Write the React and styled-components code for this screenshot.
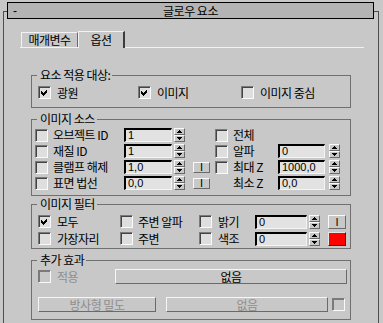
import React from "react";
import styled, { createGlobalStyle } from "styled-components";

const FONT = `"Noto Sans CJK KR", "Liberation Sans", sans-serif`;
const MONO = `"Liberation Sans", Arial, sans-serif`;

const COLORS = {
  face: "#c8c8c8",
  title: "#b4b4b4",
  light: "#f2f2f2",
  shadow: "#6a6a6a",
  dark: "#111111",
  field: "#dedede",
  frame: "#707070",
  disabled: "#8e8e8e",
};

const TEXT = `
  font-size: 12px;
  letter-spacing: -0.5px;
`;

const GlobalStyle = createGlobalStyle`
  html, body {
    margin: 0;
    background: ${COLORS.face};
  }
  body {
    font-family: ${FONT};
    font-size: 12px;
    color: #000;
  }
  * {
    box-sizing: border-box;
  }
`;

function CheckMark() {
  return (
    <svg width="7" height="7" viewBox="0 0 7 7" shapeRendering="crispEdges">
      <polygon points="0,2 2,4 6,0 6,3 2,7 0,5" fill="#000" />
    </svg>
  );
}

function Arrow({ down }) {
  return (
    <svg width="5" height="3" viewBox="0 0 5 3" shapeRendering="crispEdges">
      <polygon points={down ? "0,0 5,0 2.5,3" : "2.5,0 5,3 0,3"} fill="#000" />
    </svg>
  );
}

function CheckField({ label, checked, disabled, hidden, gap = 5 }) {
  return (
    <CheckWrap $gap={gap}>
      <Box $disabled={disabled} $hidden={hidden}>
        {checked && <CheckMark />}
      </Box>
      <Label $disabled={disabled}>{label}</Label>
    </CheckWrap>
  );
}

function Spinner() {
  return (
    <Spin>
      <SpinHalf>
        <Arrow />
      </SpinHalf>
      <SpinHalf>
        <Arrow down />
      </SpinHalf>
    </Spin>
  );
}

function App() {
  return (
    <>
      <GlobalStyle />
      <Screen>
        <Panel>
          <TitleBar>
            <Collapse>-</Collapse>
            <TitleText>글로우 요소</TitleText>
          </TitleBar>

          <TabStrip>
            <Tab>매개변수</Tab>
            <Tab $active>옵션</Tab>
          </TabStrip>

          <Group $top={21} $pad="5px 0 8px">
            <Legend>요소 적용 대상:</Legend>
            <TargetRow>
              <CheckField label="광원" checked gap={6} />
              <CheckField label="이미지" checked gap={6} />
              <CheckField label="이미지 중심" gap={6} />
            </TargetRow>
          </Group>

          <Group $top={5} $pad="2px 0 4px">
            <Legend>이미지 소스</Legend>
            <SourceGrid>
              <CheckField label="오브젝트 ID" />
              <Field $w={48}>1</Field>
              <Spinner />
              <span />
              <CheckField label="전체" />
              <span />
              <span />

              <CheckField label="재질 ID" />
              <Field $w={48}>1</Field>
              <Spinner />
              <span />
              <CheckField label="알파" />
              <Field $w={47}>0</Field>
              <Spinner />

              <CheckField label="클램프 해제" />
              <Field $w={48}>1,0</Field>
              <Spinner />
              <LockButton $w={17} $h={11}>I</LockButton>
              <CheckField label="최대 Z" />
              <Field $w={47}>1000,0</Field>
              <Spinner />

              <CheckField label="표면 법선" />
              <Field $w={48}>0,0</Field>
              <Spinner />
              <LockButton $w={17} $h={11}>I</LockButton>
              <CheckField label="최소 Z" hidden />
              <Field $w={47}>0,0</Field>
              <Spinner />
            </SourceGrid>
          </Group>

          <Group $top={2} $pad="3px 0 1px">
            <Legend>이미지 필터</Legend>
            <FilterGrid>
              <CheckField label="모두" checked gap={6} />
              <CheckField label="주변 알파" />
              <CheckField label="밝기" gap={6} />
              <Field $w={52}>0</Field>
              <Spinner />
              <LockButton $w={18} $h={14}>I</LockButton>

              <CheckField label="가장자리" gap={6} />
              <CheckField label="주변" />
              <CheckField label="색조" gap={6} />
              <Field $w={52}>0</Field>
              <Spinner />
              <Swatch />
            </FilterGrid>
          </Group>

          <Group $top={5} $pad="3px 0 7px">
            <Legend>추가 효과</Legend>
            <EffectRow>
              <EffectCheck>
                <CheckField label="적용" disabled gap={6} />
              </EffectCheck>
              <Button $w={232}>없음</Button>
            </EffectRow>
            <EffectRow $gapTop={13}>
              <Button $w={118} disabled>
                방사형 밀도
              </Button>
              <Button $w={162} $ml={10} disabled>
                없음
              </Button>
              <TrailBox $disabled />
            </EffectRow>
          </Group>
        </Panel>
      </Screen>
    </>
  );
}

const Screen = styled.div`
  width: 383px;
  height: 323px;
  overflow: hidden;
  padding-top: 11px;
`;

const Panel = styled.div`
  margin-left: 3px;
  width: 376px;
  height: 312px;
  border: 1px solid #4e4e4e;
  border-bottom: none;
`;

const TitleBar = styled.div`
  margin: -10px 0 0 3px;
  width: 367px;
  height: 17px;
  border: 1px solid #000;
  background: ${COLORS.title};
  display: grid;
  grid-template-columns: 24px 1fr 24px;
  align-items: center;
  line-height: 14px;
`;

const Collapse = styled.span`
  padding-left: 5px;
  font-family: ${MONO};
  font-size: 12px;
`;

const TitleText = styled.span`
  ${TEXT}
  text-align: center;
`;

const TabStrip = styled.div`
  margin: 12px 0 0 16px;
  width: 344px;
  height: 17px;
  padding-left: 1px;
  display: flex;
  align-items: flex-end;
  border-bottom: 1px solid ${COLORS.light};
`;

const Tab = styled.div`
  ${TEXT}
  width: ${(p) => (p.$active ? 47 : 57)}px;
  height: ${(p) => (p.$active ? 17 : 15)}px;
  margin-bottom: ${(p) => (p.$active ? -1 : 0)}px;
  background: ${COLORS.face};
  border-top: 1px solid ${COLORS.light};
  border-left: 1px solid ${COLORS.light};
  border-right: ${(p) => (p.$active ? 2 : 1)}px solid
    ${(p) => (p.$active ? "#3c3c3c" : COLORS.shadow)};
  text-align: center;
  line-height: ${(p) => (p.$active ? 15 : 13)}px;
`;

const Group = styled.fieldset`
  margin: ${(p) => p.$top}px 0 0 27px;
  width: 320px;
  min-width: 0;
  padding: ${(p) => p.$pad};
  border: 1px solid ${COLORS.frame};
`;

const Legend = styled.legend`
  ${TEXT}
  margin-left: 5px;
  padding: 0 2px 0 3px;
  height: 12px;
  line-height: 12px;
`;

const TargetRow = styled.div`
  padding-left: 6px;
  height: 13px;
  display: grid;
  grid-template-columns: 100px 103px auto;
  align-items: center;
`;

const SourceGrid = styled.div`
  padding-left: 3px;
  display: grid;
  grid-template-columns: 89px 50px 19px 22px 63px 51px 11px;
  grid-auto-rows: 16px;
  align-items: center;
`;

const FilterGrid = styled.div`
  padding-left: 6px;
  display: grid;
  grid-template-columns: 82px 79px 56px 54px 19px 18px;
  grid-auto-rows: 17px;
  align-items: center;
`;

const EffectRow = styled.div`
  margin-top: ${(p) => p.$gapTop || 0}px;
  padding-left: 6px;
  height: 15px;
  display: flex;
  align-items: center;
`;

const EffectCheck = styled.div`
  width: 77px;
`;

const CheckWrap = styled.label`
  display: flex;
  align-items: center;
  gap: ${(p) => p.$gap}px;
  white-space: nowrap;
`;

const Box = styled.span`
  flex: none;
  width: 13px;
  height: 13px;
  display: flex;
  align-items: center;
  justify-content: center;
  background: ${(p) => (p.$disabled ? COLORS.face : COLORS.field)};
  border: 1px solid;
  border-color: #7a7a7a #fafafa #fafafa #7a7a7a;
  box-shadow: inset 1px 1px 0 ${(p) => (p.$disabled ? "#7a7a7a" : "#444")};
  visibility: ${(p) => (p.$hidden ? "hidden" : "visible")};
`;

const TrailBox = styled(Box)`
  margin-left: 4px;
`;

const Label = styled.span`
  ${TEXT}
  line-height: 12px;
  color: ${(p) => (p.$disabled ? COLORS.disabled : "#000")};
`;

const Field = styled.div`
  width: ${(p) => p.$w}px;
  height: 14px;
  padding-left: 2px;
  background: #e2e2e2;
  border-style: solid;
  border-width: 2px 1px 1px 2px;
  border-color: #000 #f4f4f4 #f4f4f4 #000;
  font-family: ${MONO};
  font-size: 11px;
  line-height: 11px;
  white-space: nowrap;
  overflow: hidden;
`;

const Spin = styled.div`
  width: 11px;
  height: 14px;
  display: flex;
  flex-direction: column;
`;

const SpinHalf = styled.span`
  flex: 1;
  display: flex;
  align-items: center;
  justify-content: center;
  border: 1px solid;
  border-color: #fafafa ${COLORS.shadow} ${COLORS.shadow} #fafafa;
`;

const LockButton = styled.div`
  width: ${(p) => p.$w}px;
  height: ${(p) => p.$h}px;
  border: 1px solid;
  border-color: #fafafa ${COLORS.shadow} ${COLORS.shadow} #fafafa;
  font-family: ${MONO};
  font-size: 11px;
  line-height: ${(p) => p.$h - 2}px;
  text-align: center;
`;

const Swatch = styled.div`
  width: 18px;
  height: 14px;
  background: #ff0000;
  border: 1px solid;
  border-color: #e6e6e6 #202020 #202020 #e6e6e6;
`;

const Button = styled.button`
  ${TEXT}
  flex: none;
  margin: 0 0 0 ${(p) => p.$ml || 0}px;
  padding: 0;
  width: ${(p) => p.$w}px;
  height: 15px;
  background: ${COLORS.face};
  border: 1px solid;
  border-color: #f6f6f6 ${COLORS.shadow} ${COLORS.shadow} #f6f6f6;
  font-family: ${FONT};
  line-height: 13px;
  color: #000;
  &:disabled {
    color: ${COLORS.disabled};
  }
`;

export default App;
